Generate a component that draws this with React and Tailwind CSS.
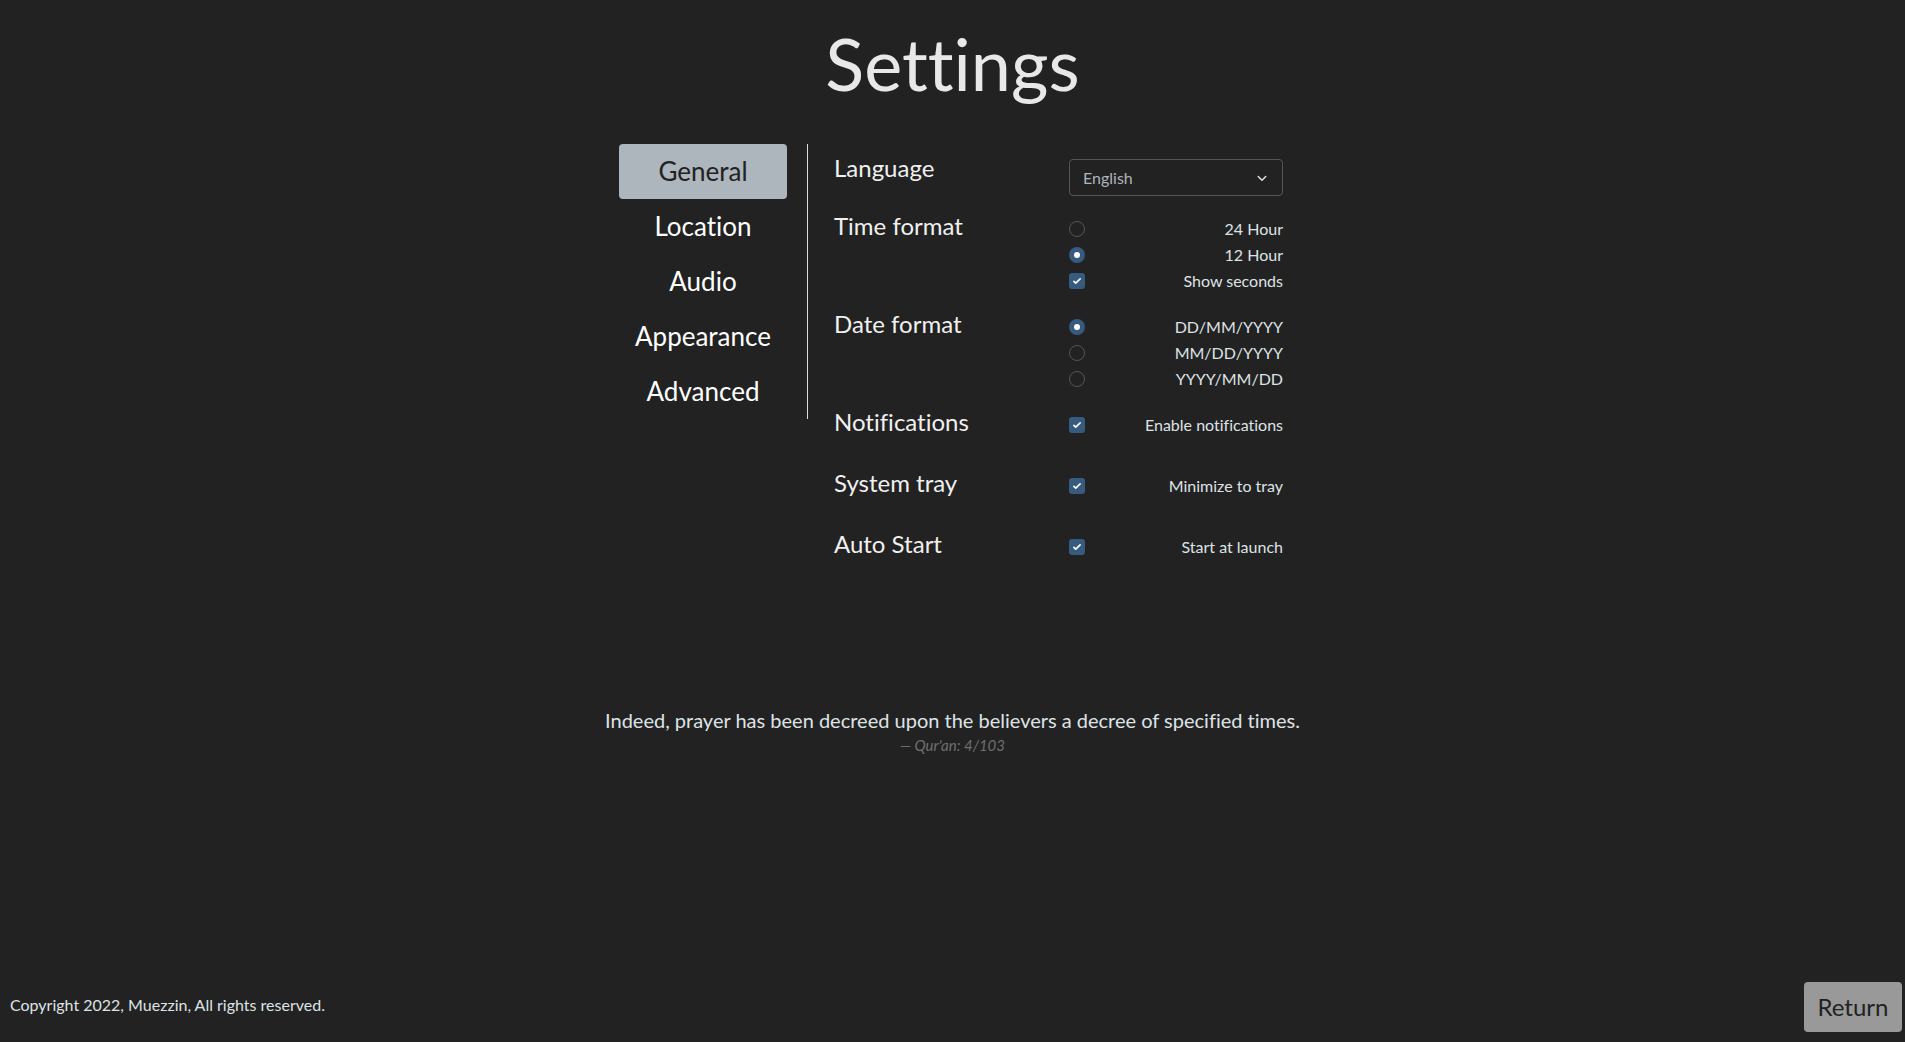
import React from 'react';

const Radio = ({ checked }) =>
  checked ? (
    <span className="w-4 h-4 rounded-full bg-[#375a7f] flex items-center justify-center shrink-0">
      <span className="w-[6px] h-[6px] rounded-full bg-white" />
    </span>
  ) : (
    <span className="w-4 h-4 rounded-full border border-[#555] shrink-0" />
  );

const Check = () => (
  <span className="w-4 h-4 rounded-[3px] bg-[#375a7f] flex items-center justify-center shrink-0">
    <svg viewBox="0 0 16 16" className="w-[10px] h-[10px]" fill="none" stroke="#fff" strokeWidth="2.6" strokeLinecap="round" strokeLinejoin="round">
      <path d="M3 8.5l3 3 7-7" />
    </svg>
  </span>
);

const Option = ({ type, checked, label }) => (
  <div className="h-[26px] flex items-center justify-between">
    {type === 'radio' ? <Radio checked={checked} /> : <Check />}
    <span className="text-base text-[#dee2e6]">{label}</span>
  </div>
);

const Row = ({ label, children, className = '' }) => (
  <div className={`flex ${className}`}>
    <div className="w-[235px] shrink-0 text-[24px] leading-9 text-[#f0f0f0]">{label}</div>
    <div className="w-[214px]">{children}</div>
  </div>
);

const nav = ['General', 'Location', 'Audio', 'Appearance', 'Advanced'];

export default function App() {
  return (
    <div className="h-[1042px] bg-[#222222] flex flex-col font-['Lato',sans-serif] text-white overflow-hidden [font-variant-ligatures:none]">
      <h1 className="text-center text-[72px] font-normal leading-none mt-[27px] h-[117px] text-[#e8e8e8]">Settings</h1>

      <div className="flex justify-center pr-[3px]">
        {/* Sidebar */}
        <div className="w-[189px] pr-5 border-r border-[#ddd] h-[275px] flex flex-col">
          {nav.map((n, i) => (
            <div
              key={n}
              className={`h-[55px] flex items-center justify-center text-[26px] rounded-[4px] ${
                i === 0 ? 'bg-[#adb5bd] text-[#222]' : 'text-white'
              }`}
            >
              {n}
            </div>
          ))}
        </div>

        {/* Content */}
        <div className="pl-[26px] pt-[6px] flex flex-col">
          <Row label="Language" className="pb-3">
            <div className="mt-[9px] h-[37px] border border-[#555] rounded-[4px] flex items-center justify-between pl-[13px] pr-[14px] text-base text-[#adb5bd]">
              <span>English</span>
              <svg viewBox="0 0 16 16" className="w-3 h-3" fill="none" stroke="#dee2e6" strokeWidth="2" strokeLinecap="round" strokeLinejoin="round">
                <path d="M3 6l5 5 5-5" />
              </svg>
            </div>
          </Row>
          <Row label="Time format" className="pb-3">
            <div className="pt-2">
              <Option type="radio" label="24 Hour" />
              <Option type="radio" checked label="12 Hour" />
              <Option type="check" label="Show seconds" />
            </div>
          </Row>
          <Row label="Date format" className="pb-3">
            <div className="pt-2">
              <Option type="radio" checked label="DD/MM/YYYY" />
              <Option type="radio" label="MM/DD/YYYY" />
              <Option type="radio" label="YYYY/MM/DD" />
            </div>
          </Row>
          <Row label="Notifications" className="h-[61px]">
            <div className="pt-2">
              <Option type="check" label="Enable notifications" />
            </div>
          </Row>
          <Row label="System tray" className="h-[61px]">
            <div className="pt-2">
              <Option type="check" label="Minimize to tray" />
            </div>
          </Row>
          <Row label="Auto Start">
            <div className="pt-2">
              <Option type="check" label="Start at launch" />
            </div>
          </Row>
        </div>
      </div>

      {/* Quote */}
      <div className="mt-[143px] text-center">
        <p className="text-[20px] text-[#dee2e6]">Indeed, prayer has been decreed upon the believers a decree of specified times.</p>
        <p className="text-[15px] italic text-[#6f6f6f] leading-5">— Qur'an: 4/103</p>
      </div>

      {/* Footer */}
      <div className="mt-auto flex items-center justify-between pl-[10px] pr-[3px] pb-[10px]">
        <span className="text-base text-[#dee2e6] -mt-[5px]">Copyright 2022, Muezzin, All rights reserved.</span>
        <button className="w-[98px] h-[50px] rounded-[4px] bg-[#999] text-[#222] text-[24px]">Return</button>
      </div>
    </div>
  );
}
